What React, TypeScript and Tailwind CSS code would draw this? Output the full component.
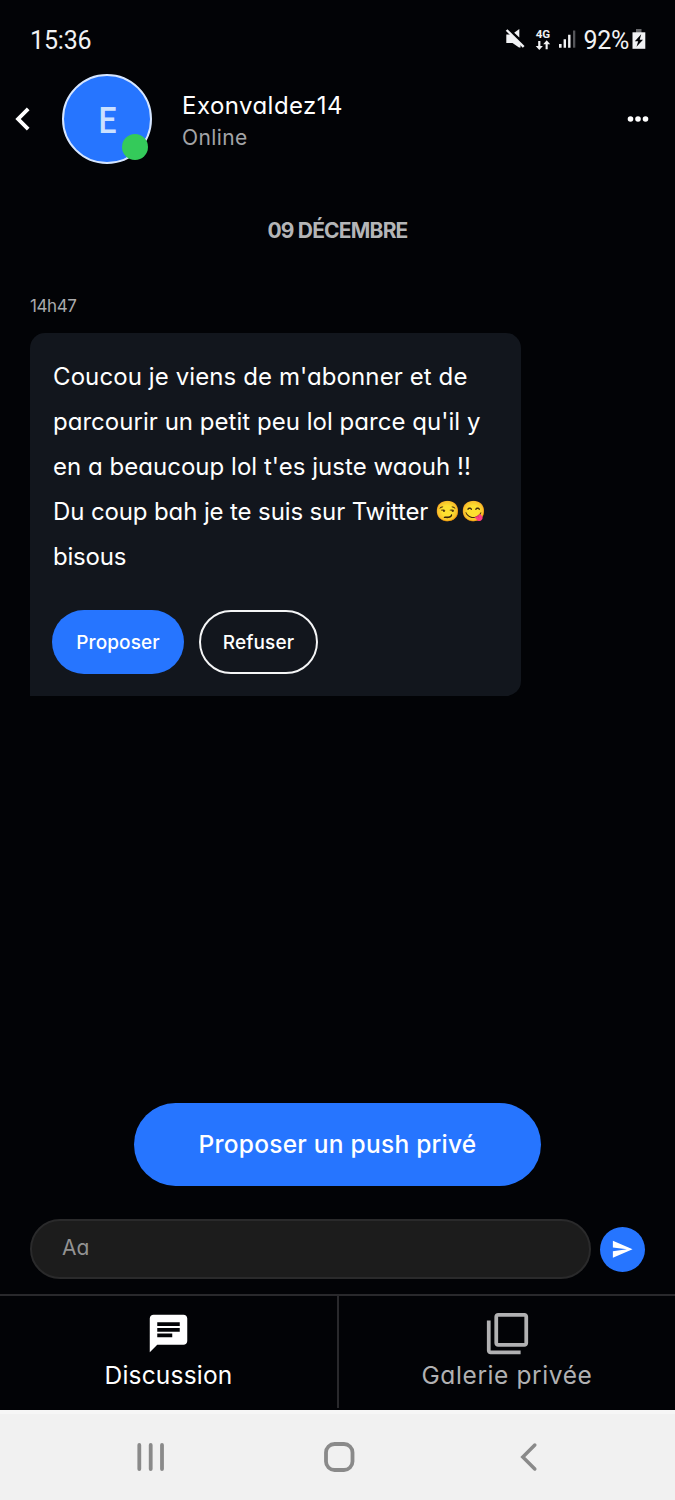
import type { ReactNode } from "react";
import {
  MdChat,
  MdChevronLeft,
  MdFilterNone,
  MdSend,
} from "react-icons/md";

function StatusBar() {
  return (
    <div className="flex h-[74px] items-start justify-between pt-[27px] pr-[29px] pl-[30px] font-['Roboto',sans-serif] text-[25px] leading-[28px] text-[#f1f2f4]">
      <span className="tracking-[-0.15px]">15:36</span>
      <div className="flex">
        <svg width="79" height="28" viewBox="0 0 79 28" className="-mt-px" fill="currentColor">
          <path d="M2.300 8.500h5L16.500 17v4.500h-1.500L8.500 17H2.300z" />
          <path d="M10.200 6.700 15.300 3v8.500z" />
          <path d="M3.500 2.200 21 19.300" stroke="#020306" strokeWidth="1.500" />
          <path d="M2.600 4 19.700 20.800" stroke="currentColor" strokeWidth="2.400" />
          <text x="31.700" y="11.700" fontSize="11.500" fontWeight="700" textLength="14.500" lengthAdjust="spacingAndGlyphs" letterSpacing="0">4G</text>
          <path d="M34.200 15v5h-2.500l3.600 4 3.600-4h-2.500v-5zM41.600 23.200v-5h-2.400l3.500-3.900 3.500 3.900h-2.500v5z" />
          <path d="M55 18h2.600v3.700H55zM59.600 13.200h2.400v8.500h-2.400zM64.100 8.800h2.400v12.900h-2.400z" />
          <path d="M69 4.500h2.300v17.200H69z" fill="#55565a" />
        </svg>
        <span className="tracking-[-0.3px]">92%</span>
        <svg width="14" height="28" viewBox="0 0 14 28" className="-mt-px ml-[3px]">
          <path d="M4 3h5.500v4H4z" fill="#67686b" />
          <path d="M.5 6.300h12.800v16.500H.5z" fill="#f1f2f4" />
          <path d="M9.200 8.300 2.800 15.200h3.400l-1.700 5.600 6.500-7H7.700z" fill="#020306" />
        </svg>
      </div>
    </div>
  );
}

function Header() {
  return (
    <header className="flex h-[90px] items-center">
      <button className="-ml-px flex w-[63px] items-center pl-px" aria-label="Retour">
        <MdChevronLeft size={46} className="text-white" />
      </button>
      <div className="relative flex size-[90px] shrink-0 items-center justify-center rounded-full border-2 border-[#d6e6ff] bg-[#2675ff]">
        <span className="mt-[3px] scale-x-[0.86] font-['Roboto',sans-serif] text-[37px] leading-none font-medium text-[#cbe1ff]">E</span>
        <span className="absolute right-[2px] bottom-[2px] size-[26px] rounded-full bg-[#34ca5a]" />
      </div>
      <div className="mt-[5px] ml-[30px] flex-1">
        <div className="text-[24px] leading-[32px] tracking-[0.45px]">Exonvaldez14</div>
        <div className="text-[21px] leading-[32px] tracking-[0.4px] text-[#a3a4a7]">Online</div>
      </div>
      <svg width="22" height="8" viewBox="0 0 22 8" className="mr-[26px]" fill="white">
        <circle cx="3.500" cy="4" r="2.800" />
        <circle cx="11" cy="4" r="2.800" />
        <circle cx="18.500" cy="4" r="2.800" />
      </svg>
    </header>
  );
}

function Message() {
  return (
    <div className="ml-[30px] flex h-[363px] w-[491px] flex-col rounded-[15px] rounded-bl-none bg-[#12161d] pt-[21px] pl-[22px]">
      <p className="pl-px text-[24px] leading-[45px] whitespace-nowrap">
        <span className="block tracking-[0.1px]">Coucou je viens de m'abonner et de</span>
        <span className="block tracking-[0.03px]">parcourir un petit peu lol parce qu'il y</span>
        <span className="block tracking-[0.03px]">en a beaucoup lol t'es juste waouh !!</span>
        <span className="flex">
          <span className="tracking-[-0.12px]">Du coup bah je te suis sur Twitter</span>
          <span className="ml-[7px] text-[20px] tracking-[0.7px]">😏😋</span>
        </span>
        <span className="block tracking-[-0.2px]">bisous</span>
      </p>
      <div className="mt-[31px] flex gap-[15px] text-[19px] font-medium tracking-[0.1px]">
        <button className="h-[64px] w-[132px] rounded-full bg-[#2675ff] pt-[2px]">Proposer</button>
        <button className="h-[64px] w-[119px] rounded-full border-2 border-[#f4f5f6] pt-[2px]">Refuser</button>
      </div>
    </div>
  );
}

function Tab({ icon, label, className }: { icon: ReactNode; label: string; className: string }) {
  return (
    <button className={`flex h-[112px] flex-col items-center pt-[15px] ${className}`}>
      {icon}
      <span className="mt-[4px] leading-[30px]">{label}</span>
    </button>
  );
}

function SystemNav() {
  return (
    <div className="flex h-[90px] items-center border-t-4 border-[#f6f6f6] bg-[#f1f1f1]">
      <svg width="675" height="40" viewBox="0 0 675 40" fill="none" stroke="#8a8a8a" strokeWidth="3.800" strokeLinecap="round">
        <path d="M139.300 8v24M150.700 8v24M162 8v24" />
        <rect x="326" y="7" width="26.500" height="26" rx="8.500" />
        <path d="M534.800 8 522.800 20l12 12" strokeWidth="3.500" />
      </svg>
    </div>
  );
}

export default function App() {
  return (
    <div className="flex h-[1500px] w-[675px] flex-col overflow-hidden bg-[#020306] font-['Inter','Liberation_Sans',sans-serif] text-white [font-feature-settings:'cv11']">
      <StatusBar />
      <Header />
      <main className="flex-1">
        <div className="mt-[51px] text-center text-[21px] leading-[32px] font-bold tracking-[-0.8px] text-[#b4b5b7]">
          09 DÉCEMBRE
        </div>
        <div className="mt-[47px] mb-[15px] ml-[30px] text-[17px] leading-[24px] tracking-[-0.4px] text-[#a9aaac]">
          14h47
        </div>
        <Message />
      </main>
      <button className="mx-auto h-[83px] w-[407px] rounded-full bg-[#2675ff] pb-px text-[24.5px] font-medium tracking-[0.25px]">
        Proposer un push privé
      </button>
      <div className="mt-[33px] mb-[15px] flex items-center gap-[9px] pl-[30px]">
        <div className="h-[60px] w-[561px] rounded-full border-2 border-[#2a2a2b] bg-[#1c1c1c] pl-[30px] text-[21px] leading-[54px] text-[#929292]">
          Aa
        </div>
        <div className="flex size-[45px] items-center justify-center rounded-full bg-[#2675ff]">
          <MdSend size={22.5} />
        </div>
      </div>
      <nav className="flex border-t-2 border-[#29292c] pb-[2px]">
        <Tab
          className="w-[337px] text-[24.5px] tracking-[0.2px]"
          icon={<MdChat size={45} />}
          label="Discussion"
        />
        <Tab
          className="flex-1 border-l-2 border-[#29292c] text-[24.5px] tracking-[0.6px] text-[#b1b1b2]"
          icon={<MdFilterNone size={45} />}
          label="Galerie privée"
        />
      </nav>
      <SystemNav />
    </div>
  );
}
